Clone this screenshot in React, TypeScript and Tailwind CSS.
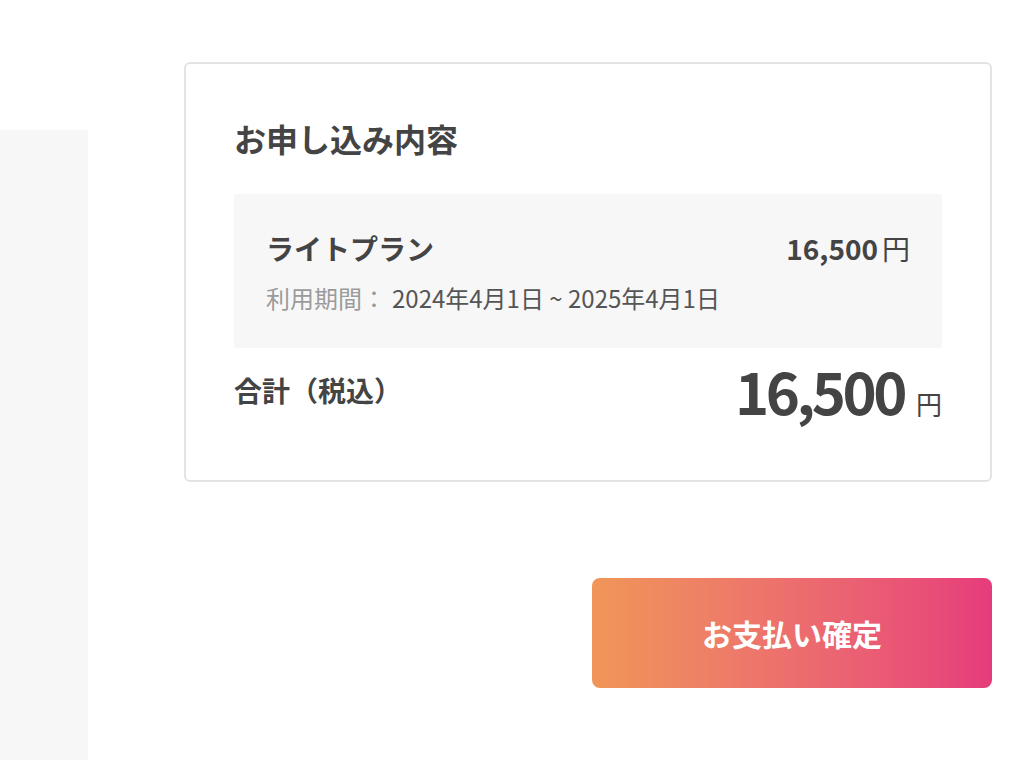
import React from "react";

export default function App() {
  const font = { fontFamily: '"Noto Sans CJK JP", "Noto Sans", sans-serif' };
  return (
    <div className="w-[1030px] h-[760px] bg-white flex overflow-hidden text-[#444]" style={font}>
      <div className="w-[88px] mt-[130px] h-[630px] bg-[#f7f7f7] shrink-0" />
      <div className="ml-[96px] pt-[62px] w-[808px] flex flex-col">
        <div className="border-2 border-[#e3e3e3] rounded-[6px] pt-[54px] pb-[57px] px-[48px]">
          <h2 className="text-[32px] font-bold leading-[40px]">お申し込み内容</h2>
          <div className="mt-[36px] bg-[#f7f7f7] pl-[32px] pr-[32px] pt-[36px] pb-[34px]">
            <div className="flex items-center justify-between">
              <span className="text-[28px] font-bold leading-[36px]">ライトプラン</span>
              <span className="flex items-baseline">
                <span className="text-[28px] font-bold leading-[36px]">16,500</span>
                <span className="text-[28px] leading-[36px] ml-[4px]">円</span>
              </span>
            </div>
            <div className="mt-[16px] text-[24px] leading-[32px] flex">
              <span className="text-[#9b9b9b]">利用期間：</span>
              <span className="text-[#555] ml-[6px]">2024年4月1日 ~ 2025年4月1日</span>
            </div>
          </div>
          <div className="mt-[10px] flex items-start justify-between">
            <span className="text-[28px] font-bold leading-[36px] mt-[14px]">合計（税込）</span>
            <span className="flex items-baseline">
              <span className="text-[58px] font-bold leading-[64px] tracking-[-0.06em]">16,500</span>
              <span className="text-[26px] ml-[12px]">円</span>
            </span>
          </div>
        </div>
        <div className="flex justify-end mt-[96px]">
          <button className="w-[400px] h-[110px] rounded-[8px] bg-gradient-to-r from-[#f09658] to-[#e63b7b] text-white text-[30px] font-bold" style={font}>
            お支払い確定
          </button>
        </div>
      </div>
    </div>
  );
}
